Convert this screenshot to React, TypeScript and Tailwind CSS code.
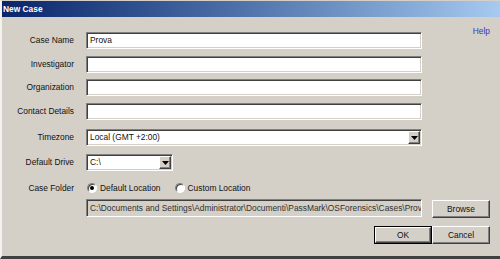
import React from 'react'

const font = { fontFamily: '"Liberation Sans", Arial, sans-serif' }

const sunken =
  'border border-t-[#808080] border-l-[#808080] border-b-white border-r-white shadow-[inset_1px_1px_0_#404040,inset_-1px_-1px_0_#d4d0c8]'
const raised =
  'border border-t-white border-l-white border-b-[#404040] border-r-[#404040] shadow-[inset_-1px_-1px_0_#808080]'

function Label({ children }: { children: React.ReactNode }) {
  return <div className="w-[72px] shrink-0 text-right">{children}</div>
}

function TextBox({ value = '', className = '' }: { value?: string; className?: string }) {
  return (
    <div className={`ml-[12px] h-[17px] bg-white flex items-center pl-[3px] overflow-hidden whitespace-nowrap ${sunken} ${className}`}>
      {value}
    </div>
  )
}

function DropArrow() {
  return (
    <div className={`w-[12px] h-[13px] bg-[#d4d0c8] flex items-center justify-center mr-[1px] ${raised}`}>
      <svg width="7" height="4" viewBox="0 0 7 4">
        <path d="M0 0h7L3.5 4z" fill="#000" />
      </svg>
    </div>
  )
}

function Combo({ value, width }: { value: string; width: string }) {
  return (
    <div className={`ml-[12px] h-[17px] bg-white flex items-center justify-between pl-[3px] ${sunken} ${width}`}>
      <span>{value}</span>
      <DropArrow />
    </div>
  )
}

function Radio({ checked }: { checked?: boolean }) {
  return (
    <div className="w-[10px] h-[10px] rounded-full bg-white border border-t-[#808080] border-l-[#808080] border-b-white border-r-white shadow-[inset_1px_1px_0_#404040] flex items-center justify-center">
      {checked && <div className="w-[4px] h-[4px] rounded-full bg-black" />}
    </div>
  )
}

function Button({ children, isDefault }: { children: React.ReactNode; isDefault?: boolean }) {
  return (
    <div className={`w-[58px] h-[18px] ${isDefault ? 'border border-black' : ''}`}>
      <div className={`w-full h-full bg-[#d4d0c8] flex items-center justify-center ${raised}`}>{children}</div>
    </div>
  )
}

export default function App() {
  return (
    <div
      className="w-[500px] h-[259px] bg-[#d4d0c8] text-[8.4px] text-[#111] flex flex-col border-t border-t-[#d4d0c8] border-l-2 border-l-[#f4f2ee] border-b-[3px] border-b-[#404040] overflow-hidden"
      style={font}
    >
      <div className="h-[16px] shrink-0 bg-gradient-to-r from-[#0a246a] to-[#a6caf0] text-white font-bold flex items-center -ml-[1px] pl-[2px]">
        New Case
      </div>

      <div className="flex flex-col pr-[10px]">
        <div className="flex items-center h-[17px] mt-[15px]">
          <Label>Case Name</Label>
          <TextBox value="Prova" className="w-[336px]" />
          <div className="ml-auto -mt-[19px] text-[#3535c8]">Help</div>
        </div>
        <div className="flex items-center h-[17px] mt-[7px]">
          <Label>Investigator</Label>
          <TextBox className="w-[336px]" />
        </div>
        <div className="flex items-center h-[17px] mt-[6px]">
          <Label>Organization</Label>
          <TextBox className="w-[336px]" />
        </div>
        <div className="flex items-center h-[17px] mt-[7px]">
          <Label>Contact Details</Label>
          <TextBox className="w-[336px]" />
        </div>

        <div className="flex items-center h-[17px] mt-[9px]">
          <Label>Timezone</Label>
          <Combo value="Local (GMT +2:00)" width="w-[336px]" />
        </div>
        <div className="flex items-center h-[17px] mt-[8px]">
          <Label>Default Drive</Label>
          <Combo value="C:\" width="w-[87px]" />
        </div>

        <div className="flex items-center h-[17px] mt-[9px]">
          <Label>Case Folder</Label>
          <div className="ml-[13px] flex items-center gap-[3px]">
            <Radio checked />
            <span>Default Location</span>
          </div>
          <div className="ml-[14px] flex items-center gap-[3px]">
            <Radio />
            <span>Custom Location</span>
          </div>
        </div>

        <div className="flex items-start mt-[2px]">
          <div className="w-[72px] shrink-0" />
          <div className={`ml-[12px] w-[336px] h-[18px] bg-[#d4d0c8] text-[#303030] flex items-center pl-[3px] overflow-hidden whitespace-nowrap ${sunken}`}>
            C:\Documents and Settings\Administrator\Documenti\PassMark\OSForensics\Cases\Prova
          </div>
          <div className="ml-[10px] mt-[1px]">
            <Button>Browse</Button>
          </div>
        </div>

        <div className="flex justify-end mt-[8px]">
          <Button isDefault>OK</Button>
          <Button>Cancel</Button>
        </div>
      </div>
    </div>
  )
}
